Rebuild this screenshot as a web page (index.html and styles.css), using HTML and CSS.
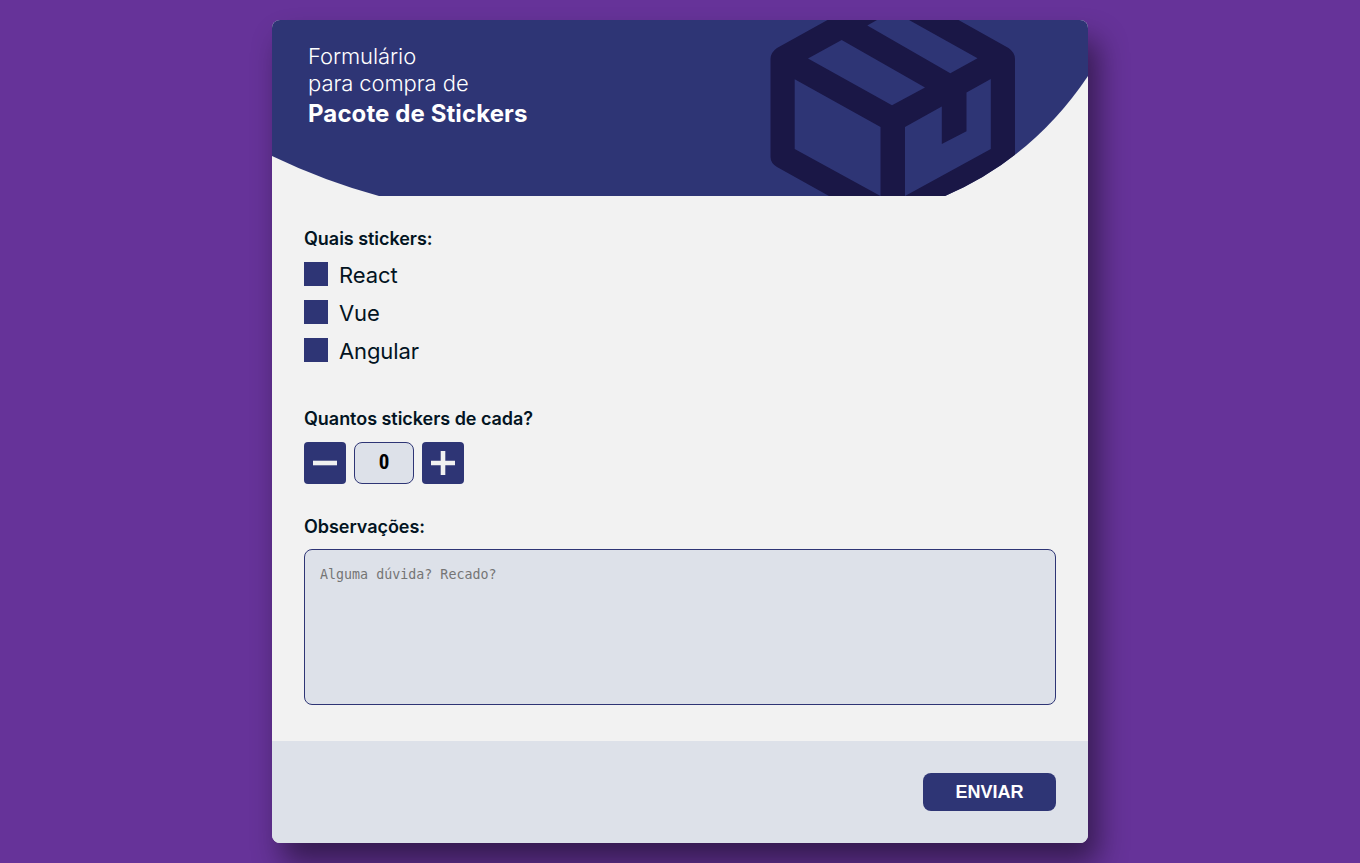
FILE: index.html
```
<!DOCTYPE html>
<html lang="pt-BR">
<head>
<meta charset="UTF-8">
<title>Formulário</title>
<link rel="stylesheet" href="styles.css">
</head>
<body>
<form class="card">
  <header class="header">
    <svg class="header-art" viewBox="0 0 816 176" aria-hidden="true">
      <defs><clipPath id="curve"><path d="M0 0H816V56Q761 138 673 176H107Q52 161 0 136Z"/></clipPath></defs>
      <g clip-path="url(#curve)">
        <path fill="#2e3575" d="M0 0H816V176H0Z"/>
        <path fill="#1a1746" d="M555.500 0H686.500L736.500 28Q743 32.500 743 39V137Q743 143.500 736.500 147L686 176H557L505 147Q498.500 143 498.500 137V39Q498.500 32.500 505 28Z"/>
        <path fill="#2e3575" d="M536 38.500L569.700 20L653 67.500L620 85.300ZM595.300 5.500L605 0H637L705.500 38.300L678.300 53.300ZM522.700 59.300L608.500 107V176L522.700 129ZM633 107L669.800 86.500V124L694.500 111.300V72.500L718.800 59V129L633 176Z"/>
      </g>
    </svg>
    <h1 class="title">Formulário<br>para compra de<br><strong>Pacote de Stickers</strong></h1>
  </header>
  <main class="content">
    <section>
      <h2 class="label">Quais stickers:</h2>
      <div class="options">
        <label class="option"><span class="check"></span>React</label>
        <label class="option"><span class="check"></span>Vue</label>
        <label class="option"><span class="check"></span>Angular</label>
      </div>
    </section>
    <section class="quantity">
      <h2 class="label">Quantos stickers de cada?</h2>
      <div class="stepper">
        <button type="button" class="step" aria-label="Diminuir"><svg width="24" height="24" viewBox="0 0 24 24"><path fill="#f1f1f1" d="M0 9.700H24V14.300H0Z"/></svg></button>
        <input class="amount" type="text" value="0">
        <button type="button" class="step" aria-label="Aumentar"><svg width="24" height="24" viewBox="0 0 24 24"><path fill="#f1f1f1" d="M0 9.700H9.700V0H14.300V9.700H24V14.300H14.300V24H9.700V14.300H0Z"/></svg></button>
      </div>
    </section>
    <section class="notes">
      <h2 class="label">Observações:</h2>
      <textarea class="textarea" placeholder="Alguma dúvida? Recado?"></textarea>
    </section>
  </main>
  <footer class="footer"><button type="button" class="submit">ENVIAR</button></footer>
</form>
</body>
</html>
```
FILE: styles.css
```
* { box-sizing: border-box; margin: 0; padding: 0; }
body {
  min-height: 863px;
  padding: 20px 0;
  overflow: hidden;
  background: #663399;
  color: #031422;
  font-family: Inter, sans-serif;
}
.card {
  display: flex;
  flex-direction: column;
  width: 816px;
  height: 823px;
  margin: 0 auto;
  overflow: hidden;
  border-radius: 8px;
  background: #f2f2f2;
  box-shadow: 10px 20px 30px rgba(0, 0, 0, .48);
}
.header { display: grid; height: 176px; }
.header-art { grid-area: 1 / 1; width: 816px; height: 176px; }
.title {
  grid-area: 1 / 1;
  z-index: 1;
  padding: 23px 36px;
  color: #fff;
  font-size: 22px;
  font-weight: 300;
  letter-spacing: -.08px;
  line-height: 27px;
}
.title strong { font-size: 24px; font-weight: 700; letter-spacing: .1px; line-height: 34px; }
.content { flex: 1; padding: 32px; }
.label { font-size: 18px; font-weight: 600; letter-spacing: -.04px; line-height: 22px; }
.options { display: grid; gap: 14px; margin-top: 12px; }
.option { display: flex; gap: 11px; height: 24px; font-size: 22px; letter-spacing: -.1px; line-height: 27px; }
.check { width: 24px; height: 24px; background: #2e3575; }
.quantity { margin-top: 46px; }
.stepper { display: flex; gap: 8px; margin-top: 12px; }
.step {
  display: grid;
  place-items: center;
  width: 42px;
  height: 42px;
  border: 0;
  border-radius: 4px;
  background: #2e3575;
}
.amount {
  width: 60px;
  height: 42px;
  padding-bottom: 2px;
  border: 1px solid #2e3575;
  border-radius: 8px;
  background: #dde1e9;
  color: #000;
  font: 700 21px "Roboto Condensed", Roboto, sans-serif;
  font-stretch: 75%;
  text-align: center;
}
.notes { margin-top: 32px; }
.textarea {
  display: block;
  width: 752px;
  height: 156px;
  margin-top: 11px;
  padding: 17px 15px;
  border: 1px solid #2e3575;
  border-radius: 8px;
  background: #dde1e9;
  font: 13.333px "DejaVu Sans Mono", monospace;
  resize: none;
}
.textarea::placeholder { color: #757575; }
.footer {
  display: flex;
  justify-content: flex-end;
  height: 102px;
  padding: 32px;
  background: #dde1e9;
}
.submit {
  width: 133px;
  height: 38px;
  border: 0;
  border-radius: 8px;
  background: #2e3575;
  color: #fff;
  font: 700 18px "Liberation Sans", Arial, sans-serif;
}
```
